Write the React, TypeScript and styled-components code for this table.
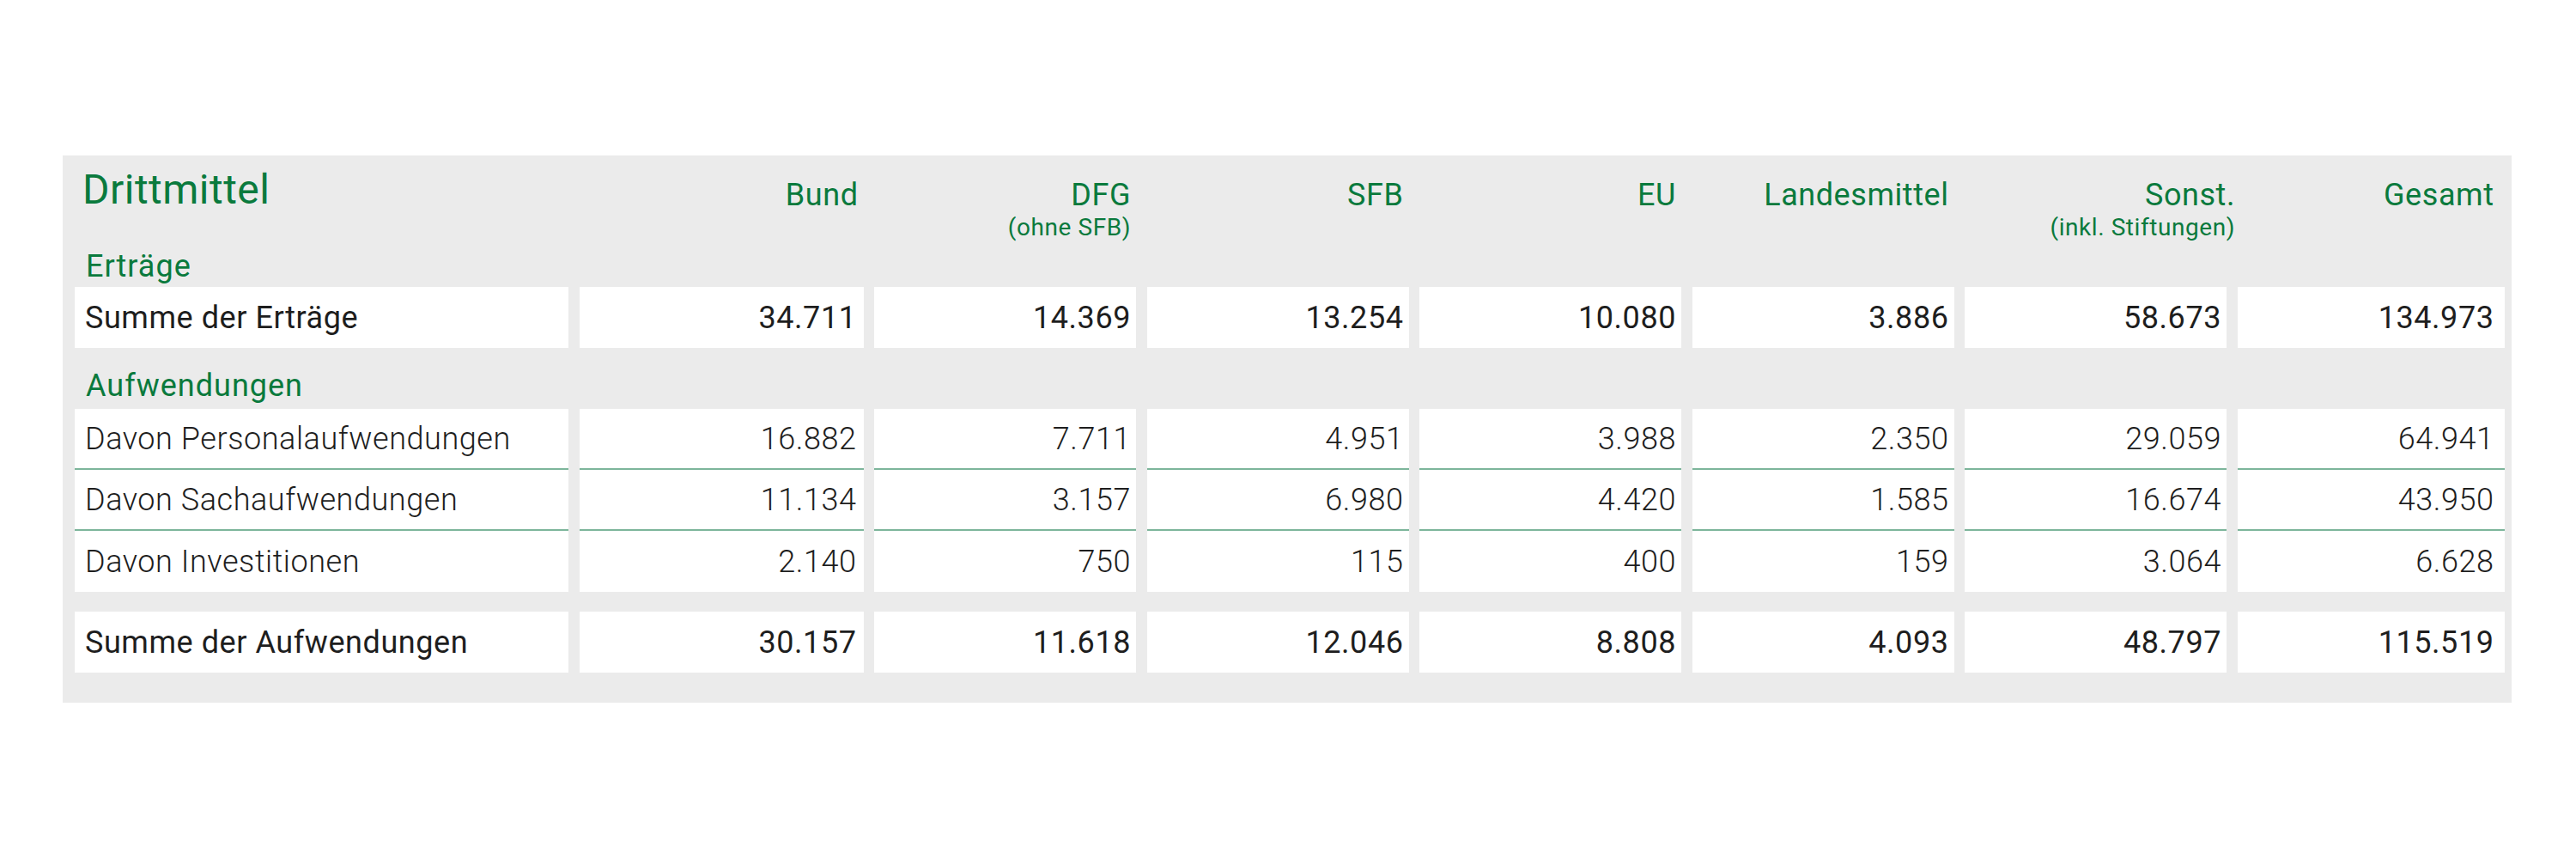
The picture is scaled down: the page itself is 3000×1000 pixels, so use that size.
import React from 'react';
import styled, { createGlobalStyle } from 'styled-components';

const GlobalStyle = createGlobalStyle`
  body {
    margin: 0;
    background: #ffffff;
    font-family: Roboto, 'Liberation Sans', sans-serif;
    letter-spacing: 0.035em;
  }
`;

const green = '#0a7a3d';
const ink = '#1e1e1e';
const rule = '#7db59b';

const COLUMNS = '575px 331px repeat(5, 305px) 311px';

const Panel = styled.div`
  box-sizing: border-box;
  width: 2852px;
  margin: 181px 0 0 73px;
  padding: 16px 8px 35px 14px;
  background: #ebebeb;
`;

const Grid = styled.div`
  display: grid;
  grid-template-columns: ${COLUMNS};
  column-gap: 12.5px;
`;

const HeaderRow = styled(Grid)`
  height: 93px;
  align-items: start;
`;

const Title = styled.div`
  font-size: 48px;
  line-height: 48px;
  font-weight: 400;
  letter-spacing: 0.01em;
  color: ${green};
  padding-left: 9px;
`;

const ColHead = styled.div<{ $pad: number }>`
  margin-top: 8px;
  margin-right: ${(p) => p.$pad}px;
  text-align: right;
  color: ${green};
`;

const ColLabel = styled.div`
  font-size: 36px;
  line-height: 44px;
  font-weight: 400;
`;

const ColSub = styled.div`
  margin-top: 1px;
  font-size: 28px;
  line-height: 30px;
  font-weight: 400;
  letter-spacing: 0.02em;
`;

const SectionLabel = styled.div<{ $top: number; $bottom: number }>`
  margin: ${(p) => p.$top}px 0 ${(p) => p.$bottom}px;
  padding-left: 13px;
  height: 40px;
  font-size: 36px;
  line-height: 40px;
  font-weight: 400;
  letter-spacing: 0.028em;
  color: ${green};
  white-space: nowrap;
`;

const Row = styled(Grid)<{ $gapTop?: number }>`
  margin-top: ${(p) => p.$gapTop || 0}px;
`;

const Cell = styled.div<{ $strong?: boolean; $ruled?: boolean; $pad: number; $first?: boolean }>`
  box-sizing: border-box;
  height: 71px;
  display: flex;
  align-items: center;
  justify-content: ${(p) => (p.$first ? 'flex-start' : 'flex-end')};
  padding: 0 ${(p) => (p.$first ? 0 : p.$pad)}px 0 ${(p) => (p.$first ? 12 : 0)}px;
  background: #ffffff;
  border-bottom: ${(p) => (p.$ruled ? `2px solid ${rule}` : 'none')};
  font-size: 36px;
  font-weight: ${(p) => (p.$strong ? 400 : 300)};
  color: ${ink};
  white-space: nowrap;
`;

type Column = { label: string; sub?: string; headPad: number; cellPad: number };

const columns: Column[] = [
  { label: 'Bund', headPad: 6, cellPad: 8 },
  { label: 'DFG', sub: '(ohne SFB)', headPad: 6, cellPad: 6 },
  { label: 'SFB', headPad: 6, cellPad: 6 },
  { label: 'EU', headPad: 6, cellPad: 6 },
  { label: 'Landesmittel', headPad: 6, cellPad: 6 },
  { label: 'Sonst.', sub: '(inkl. Stiftungen)', headPad: -10, cellPad: 6 },
  { label: 'Gesamt', headPad: 12, cellPad: 12 },
];

type Line = { label: string; values: string[] };

const ertraege: Line = {
  label: 'Summe der Erträge',
  values: ['34.711', '14.369', '13.254', '10.080', '3.886', '58.673', '134.973'],
};

const details: Line[] = [
  {
    label: 'Davon Personalaufwendungen',
    values: ['16.882', '7.711', '4.951', '3.988', '2.350', '29.059', '64.941'],
  },
  {
    label: 'Davon Sachaufwendungen',
    values: ['11.134', '3.157', '6.980', '4.420', '1.585', '16.674', '43.950'],
  },
  {
    label: 'Davon Investitionen',
    values: ['2.140', '750', '115', '400', '159', '3.064', '6.628'],
  },
];

const aufwendungen: Line = {
  label: 'Summe der Aufwendungen',
  values: ['30.157', '11.618', '12.046', '8.808', '4.093', '48.797', '115.519'],
};

function renderRow(line: Line, strong: boolean, ruled: boolean, gapTop?: number) {
  return (
    <Row key={line.label} $gapTop={gapTop}>
      <Cell $first $strong={strong} $ruled={ruled} $pad={0}>
        {line.label}
      </Cell>
      {line.values.map((value, i) => (
        <Cell key={i} $strong={strong} $ruled={ruled} $pad={columns[i].cellPad}>
          {value}
        </Cell>
      ))}
    </Row>
  );
}

export default function App() {
  return (
    <>
      <GlobalStyle />
      <Panel>
        <HeaderRow>
          <Title>Drittmittel</Title>
          {columns.map((col) => (
            <ColHead key={col.label} $pad={col.headPad}>
              <ColLabel>{col.label}</ColLabel>
              {col.sub && <ColSub>{col.sub}</ColSub>}
            </ColHead>
          ))}
        </HeaderRow>

        <SectionLabel $top={0} $bottom={4}>
          Erträge
        </SectionLabel>
        {renderRow(ertraege, true, false)}

        <SectionLabel $top={24} $bottom={7}>
          Aufwendungen
        </SectionLabel>
        {details.map((line, i) => renderRow(line, false, i < details.length - 1))}

        {renderRow(aufwendungen, true, false, 23)}
      </Panel>
    </>
  );
}
